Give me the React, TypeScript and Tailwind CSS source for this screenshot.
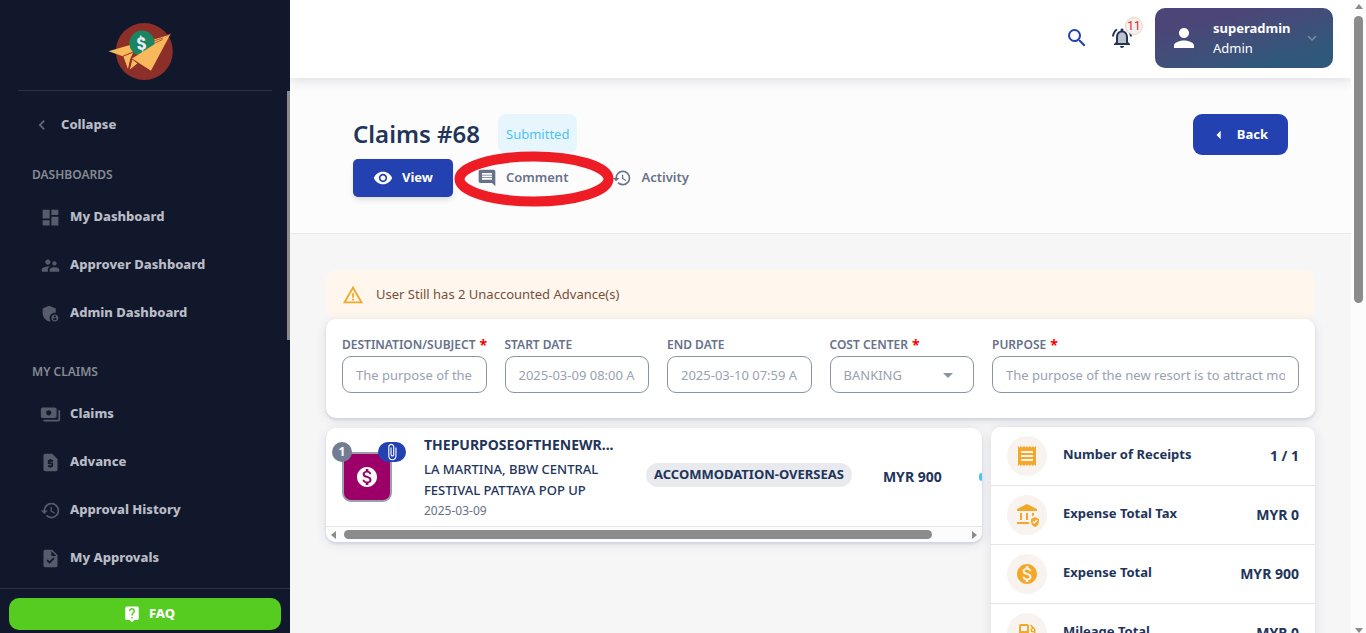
import type { ReactNode } from "react"
import type { IconType } from "react-icons"
import {
  MdAdminPanelSettings,
  MdArrowDropDown,
  MdArrowLeft,
  MdAssuredWorkload,
  MdAttachFile,
  MdComment,
  MdDashboard,
  MdHistory,
  MdKeyboardArrowDown,
  MdKeyboardArrowLeft,
  MdLiveHelp,
  MdLocalGasStation,
  MdMonetizationOn,
  MdPayments,
  MdPerson,
  MdReceipt,
  MdRequestPage,
  MdSearch,
  MdSupervisorAccount,
  MdTask,
  MdVisibility,
  MdWarningAmber,
} from "react-icons/md"

interface NavGroup {
  title: string
  items: Array<{ label: string; icon: IconType }>
}

const navGroups: NavGroup[] = [
  {
    title: "DASHBOARDS",
    items: [
      { label: "My Dashboard", icon: MdDashboard },
      { label: "Approver Dashboard", icon: MdSupervisorAccount },
      { label: "Admin Dashboard", icon: MdAdminPanelSettings },
    ],
  },
  {
    title: "MY CLAIMS",
    items: [
      { label: "Claims", icon: MdPayments },
      { label: "Advance", icon: MdRequestPage },
      { label: "Approval History", icon: MdHistory },
      { label: "My Approvals", icon: MdTask },
    ],
  },
]

const summaryRows: Array<{ label: string; value: string; icon: IconType }> = [
  { label: "Number of Receipts", value: "1 / 1", icon: MdReceipt },
  { label: "Expense Total Tax", value: "MYR 0", icon: MdAssuredWorkload },
  { label: "Expense Total", value: "MYR 900", icon: MdMonetizationOn },
  { label: "Mileage Total", value: "MYR 0", icon: MdLocalGasStation },
]

function Logo() {
  return (
    <svg viewBox="324 66 198 178" className="h-[59px] w-[66px]" aria-hidden="true">
      <circle cx="433" cy="155" r="86" fill="#8d2f29" />
      <g fill="#f9b85b" stroke="#8d2f29" strokeWidth="3" strokeLinejoin="round">
        <path d="M368 169L402 156L392 178L384 213Z" />
        <path d="M440 124L512 102L450 150Z" />
      </g>
      <path d="M325 154L392 135L402 156L368 169Z" fill="#f9b85b" />
      <circle cx="426" cy="130" r="38" fill="#1b8561" />
      <text
        x="424"
        y="149"
        textAnchor="middle"
        transform="rotate(-8 424 132)"
        className="font-[Roboto] text-[52px] font-black"
        fill="#e9ecf5"
      >
        $
      </text>
      <path d="M396 177L414 191L387 213Z" fill="#f9b85b" stroke="#8d2f29" strokeWidth="3" />
      <path d="M396 176L512 102L453 213Z" fill="#f9b85b" />
      <path d="M462 123l28-9M464 130l24-11M368 169l34-14" stroke="#8d2f29" strokeWidth="2" />
    </svg>
  )
}

function Bell() {
  return (
    <svg viewBox="0 0 24 24" className="size-6" fill="#22345a" aria-hidden="true">
      <path d="M12 6.5c-2.49 0-4 2.02-4 4.5v6h8v-6c0-2.48-1.51-4.5-4-4.5z" fill="#bcc1cc" />
      <path d="M12 22c1.1 0 2-.9 2-2h-4c0 1.1.9 2 2 2zm6-6v-5c0-3.07-1.63-5.64-4.5-6.32V4c0-.83-.67-1.5-1.5-1.5s-1.5.67-1.5 1.5v.68C7.64 5.36 6 7.92 6 11v5l-2 2v1h16v-1l-2-2zm-2 1H8v-6c0-2.48 1.51-4.5 4-4.5s4 2.02 4 4.5v6zM7.58 4.08L6.15 2.65C3.75 4.48 2.17 7.3 2.03 10.5h2c.15-2.65 1.51-4.97 3.55-6.42zm12.39 6.42h2c-.15-3.2-1.73-6.02-4.12-7.85l-1.42 1.43c2.02 1.45 3.39 3.77 3.54 6.42z" />
    </svg>
  )
}

function Sidebar() {
  return (
    <aside className="flex w-[290px] shrink-0 flex-col bg-[#12182b] text-[#b9bcc6]">
      <div className="mx-[18px] flex shrink-0 justify-center border-b border-[#2b3044] pt-[22px] pr-2 pb-[9px]">
        <Logo />
      </div>
      <div className="flex min-h-0 grow justify-between overflow-hidden">
        <nav className="grow pt-[10px]">
          <button className="flex h-12 items-center gap-[9px] pl-8 text-[13px] font-extrabold">
            <MdKeyboardArrowLeft className="size-5 text-[#636979]" />
            Collapse
          </button>
          {navGroups.map((group) => (
            <section key={group.title} className="pb-[9px]">
              <h2 className="flex h-11 items-center pt-2 pl-8 text-xs font-semibold text-[#868a92]">
                {group.title}
              </h2>
              {group.items.map(({ label, icon: Icon }) => (
                <a
                  key={label}
                  href="#"
                  className="flex h-12 items-center gap-[9px] pl-10 text-[13px] font-extrabold"
                >
                  <Icon className="size-[21px] text-[#565c6b]" />
                  {label}
                </a>
              ))}
            </section>
          ))}
        </nav>
        <div className="h-[249px] w-[3px] shrink-0 bg-[#8b8b8f]" />
      </div>
      <div className="shrink-0 border-t border-[#2b3044] px-[9px] pt-[9px] pb-[3px]">
        <button className="flex h-8 w-full items-center justify-center gap-2 rounded-[10px] bg-[#56cb20] pl-2 text-[13px] font-extrabold text-white">
          <MdLiveHelp className="size-[18px]" />
          FAQ
        </button>
      </div>
    </aside>
  )
}

function TopBar() {
  return (
    <header className="relative z-10 flex h-[78px] shrink-0 items-center justify-end bg-white pr-[18px] pb-[2px] shadow-[0_2px_12px_rgba(40,45,90,0.16)]">
      <button aria-label="Search" className="mr-[21px] text-[#2341b0]">
        <MdSearch className="size-6" />
      </button>
      <button aria-label="Notifications" className="relative mr-[21px]">
        <Bell />
        <span className="absolute -top-[9px] left-[15px] flex size-[18px] items-center justify-center rounded-full border border-[#f5d3bd] bg-[#f1f1f3] font-[Roboto] text-xs text-[#ee2222]">
          11
        </span>
      </button>
      <button className="flex h-[60px] w-[178px] items-center rounded-[10px] bg-linear-165 from-[#4b4677] from-25% to-[#2f587b] to-80% pl-[14px] text-left text-[13px] leading-5 text-white">
        <MdPerson className="size-[30px]" />
        <span className="ml-[14px] grow">
          <span className="block font-bold">superadmin</span>
          <span className="block">Admin</span>
        </span>
        <MdKeyboardArrowDown className="mr-3 size-[18px] text-[#8088a0]" />
      </button>
    </header>
  )
}

function PageHeading() {
  return (
    <div className="flex h-[156px] shrink-0 items-start justify-between border-b border-[#e9e9ec] bg-[#fcfcfc] pt-9 pr-[63px] pl-[63px]">
      <div>
        <div className="flex items-center gap-[18px]">
          <h1 className="text-2xl font-semibold text-[#22345a]">Claims #68</h1>
          <span className="flex h-[39px] items-center rounded-lg bg-[#e7f6fc] px-2 pt-[2px] text-[13px] text-[#4cc2f7]">
            Submitted
          </span>
        </div>
        <div className="relative mt-[6px] flex gap-1 text-[13px] font-semibold text-[#67718a]">
          <button className="flex h-[38px] items-center gap-[9px] rounded-[5px] bg-[#2341b0] px-5 font-bold text-white shadow-md">
            <MdVisibility className="size-5" />
            View
          </button>
          <button className="flex h-[38px] items-center gap-[9px] px-5">
            <MdComment className="size-5" />
            Comment
          </button>
          <button className="flex h-[38px] items-center gap-[9px] px-5">
            <MdHistory className="size-5" />
            Activity
          </button>
          <svg
            viewBox="0 0 160 56"
            className="pointer-events-none absolute -top-2 left-[101px] h-14 w-40"
            aria-hidden="true"
          >
            <ellipse cx="80" cy="28" rx="74.5" ry="22.5" fill="none" stroke="#ee1c25" strokeWidth="10" />
          </svg>
        </div>
      </div>
      <button className="flex h-[41px] items-center gap-2 rounded-[9px] bg-[#2341b0] pr-5 pl-4 text-[13px] font-bold text-white">
        <MdArrowLeft className="size-5" />
        Back
      </button>
    </div>
  )
}

interface FieldProps {
  id: string
  label: string
  required?: boolean
  className?: string
  children: ReactNode
}

function Field({ id, label, required, className, children }: FieldProps) {
  return (
    <div className={className}>
      <label
        htmlFor={id}
        className="flex h-[22px] items-center gap-1 text-xs font-semibold whitespace-nowrap text-[#67718a]"
      >
        {label}
        {required && <span className="text-sm leading-4 font-bold text-[#ff0000]">*</span>}
      </label>
      {children}
    </div>
  )
}

const inputClass =
  "h-[37px] w-full rounded-[9px] border border-[#8b93a5] bg-white px-[13px] text-[13px] text-[#9aa1b1]"

function ClaimForm() {
  return (
    <form className="grid grid-cols-6 gap-x-[18px] rounded-[10px] bg-white px-4 pt-[15px] pb-[25px] shadow-[0_2px_3px_#cfd3df,0_2px_12px_rgba(40,45,90,0.10)]">
      <Field id="subject" label="DESTINATION/SUBJECT" required>
        <input id="subject" className={inputClass} defaultValue="The purpose of the new resort" />
      </Field>
      <Field id="start" label="START DATE">
        <input id="start" className={inputClass} defaultValue="2025-03-09 08:00 AM" />
      </Field>
      <Field id="end" label="END DATE">
        <input id="end" className={inputClass} defaultValue="2025-03-10 07:59 AM" />
      </Field>
      <Field id="center" label="COST CENTER" required>
        <div className="relative">
          <select id="center" className={`${inputClass} appearance-none pt-[2px]`}>
            <option>BANKING</option>
          </select>
          <MdArrowDropDown className="pointer-events-none absolute top-[7px] right-[14px] size-6 text-[#8b93a5]" />
        </div>
      </Field>
      <Field id="purpose" label="PURPOSE" required className="col-span-2">
        <input
          id="purpose"
          className={inputClass}
          defaultValue="The purpose of the new resort is to attract more visitors"
        />
      </Field>
    </form>
  )
}

function ExpenseCard() {
  return (
    <section className="mt-px min-w-0 grow overflow-hidden rounded-[10px] bg-white shadow-[0_2px_3px_#cfd3df,0_2px_12px_rgba(40,45,90,0.10)]">
      <div className="flex h-[98px] items-center pl-4">
        <div className="relative flex size-[50px] shrink-0 items-center justify-center rounded-[9px] border-2 border-[#9aa0ac] bg-[#9c0068] text-white">
          <MdMonetizationOn className="size-6" />
          <span className="absolute -top-3 -left-3 flex size-5 items-center justify-center rounded-full bg-[#727d93] text-xs font-bold">
            1
          </span>
          <span className="absolute -top-3 -right-4 flex h-5 w-7 items-center justify-center rounded-full bg-[#2341b0]">
            <MdAttachFile className="size-[18px]" />
          </span>
        </div>
        <div className="ml-8 w-[200px] shrink-0 text-[#22345a]">
          <h3 className="mb-[2px] text-sm leading-6 font-bold">THEPURPOSEOFTHENEWR...</h3>
          <p className="text-[13px] leading-[21px] font-medium">
            LA MARTINA, BBW CENTRAL FESTIVAL PATTAYA POP UP
          </p>
          <p className="text-xs leading-5 text-[#67718a]">2025-03-09</p>
        </div>
        <span className="mb-1 ml-[22px] flex h-6 shrink-0 items-center rounded-full bg-[#e8eaee] px-2 text-[13px] font-bold text-[#22345a]">
          ACCOMMODATION-OVERSEAS
        </span>
        <span className="ml-[31px] shrink-0 text-sm font-bold text-[#22345a]">MYR 900</span>
        <span className="ml-auto h-2 w-[3px] shrink-0 rounded-l-full bg-[#4cc2f7]" />
      </div>
      <div className="flex h-4 items-center border-t border-[#e5e6ea] bg-[#fcfcfc] px-[5px] text-[#8b8b8b]">
        <svg viewBox="0 0 5 8" className="h-2 w-[5px]" fill="currentColor" aria-hidden="true">
          <path d="M5 0v8L0 4z" />
        </svg>
        <div className="mr-10 ml-2 h-[9px] grow rounded-full bg-[#8b8b8b]" />
        <svg viewBox="0 0 5 8" className="h-2 w-[5px]" fill="currentColor" aria-hidden="true">
          <path d="M0 0v8l5-4z" />
        </svg>
      </div>
    </section>
  )
}

function SummaryCard() {
  return (
    <section className="w-[324px] shrink-0 rounded-t-[10px] bg-white font-bold text-[#22345a] shadow-[0_2px_12px_rgba(40,45,90,0.12)]">
      {summaryRows.map(({ label, value, icon: Icon }) => (
        <div key={label} className="flex h-[59px] items-center border-b border-[#e5e6ea] px-4">
          <span className="flex size-10 items-center justify-center rounded-full bg-[#f8f3ee]">
            <Icon className="size-6 text-[#f3a829]" />
          </span>
          <span className="ml-4 grow pb-[2px] text-[13px]">{label}</span>
          <span className="text-sm">{value}</span>
        </div>
      ))}
    </section>
  )
}

function PageScrollbar() {
  return (
    <div className="flex w-[15px] shrink-0 flex-col items-center justify-between bg-[#fcfcfc] py-1 text-[#8b8b8b]">
      <div className="flex flex-col items-center">
        <svg viewBox="0 0 8 5" className="h-[5px] w-2" fill="currentColor" aria-hidden="true">
          <path d="M0 5h8L4 0z" />
        </svg>
        <div className="mt-[7px] h-[287px] w-[9px] rounded-full bg-[#8b8b8b]" />
      </div>
      <svg viewBox="0 0 8 5" className="-mb-1 h-[5px] w-2" fill="currentColor" aria-hidden="true">
        <path d="M0 0h8L4 5z" />
      </svg>
    </div>
  )
}

export default function App() {
  return (
    <div className="flex h-screen overflow-hidden bg-[#f6f6f7] font-['Noto_Sans',sans-serif]">
      <Sidebar />
      <div className="flex min-w-0 grow flex-col overflow-hidden">
        <TopBar />
        <PageHeading />
        <main className="min-h-0 grow overflow-hidden px-9 pt-9">
          <div
            role="alert"
            className="flex h-[49px] items-center gap-3 rounded-[10px] bg-[#fff7ed] px-4 text-[13px] text-[#7a4d3c]"
          >
            <MdWarningAmber className="size-[22px] text-[#f3a829]" />
            User Still has 2 Unaccounted Advance(s)
          </div>
          <ClaimForm />
          <div className="mt-[9px] flex items-start gap-[9px]">
            <ExpenseCard />
            <SummaryCard />
          </div>
        </main>
      </div>
      <PageScrollbar />
    </div>
  )
}
